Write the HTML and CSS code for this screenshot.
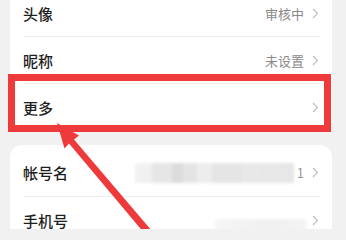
FILE: index.html
```html
<!DOCTYPE html>
<html lang="zh-CN">
<head>
<meta charset="utf-8">
<title>个人信息</title>
<link rel="stylesheet" href="styles.css">
</head>
<body>
<div class="screen">
  <div class="card card-top">
    <div class="row">
      <span class="label">头像</span>
      <span class="value">审核中</span>
      <svg class="chev" width="7" height="11" viewBox="0 0 7 11"><polyline points="1,1 5.5,5.5 1,10" /></svg>
    </div>
    <div class="row">
      <span class="label">昵称</span>
      <span class="value">未设置</span>
      <svg class="chev" width="7" height="11" viewBox="0 0 7 11"><polyline points="1,1 5.5,5.5 1,10" /></svg>
    </div>
    <div class="row">
      <span class="label">更多</span>
      <svg class="chev" width="7" height="11" viewBox="0 0 7 11"><polyline points="1,1 5.5,5.5 1,10" /></svg>
    </div>
  </div>

  <div class="card card-bottom">
    <div class="row">
      <span class="label">帐号名</span>
      <span class="blur blur-name"></span>
      <span class="value value-tail">1</span>
      <svg class="chev" width="7" height="11" viewBox="0 0 7 11"><polyline points="1,1 5.5,5.5 1,10" /></svg>
    </div>
    <div class="row">
      <span class="label">手机号</span>
      <span class="blur blur-phone"></span>
      <svg class="chev" width="7" height="11" viewBox="0 0 7 11"><polyline points="1,1 5.5,5.5 1,10" /></svg>
    </div>
  </div>

  <div class="highlight"></div>
  <svg class="arrow" width="346" height="229" viewBox="0 0 346 229">
    <polygon points="57,123 79,135.5 74,139.5 152,231 145,234 69,143.5 64.5,148.5" />
  </svg>
</div>
</body>
</html>
```

FILE: styles.css
```css
html, body {
  margin: 0;
  padding: 0;
  background: #f1f1f1;
}

.screen {
  position: relative;
  width: 346px;
  height: 229px;
  overflow: hidden;
  padding: 0 14px 0 10px;
  box-sizing: border-box;
  font-family: "Noto Sans CJK SC", "Noto Sans", sans-serif;
}

.card {
  background: #ffffff;
  border-radius: 12px;
}

.card-top {
  margin-top: -10px;
  padding-bottom: 1px;
}

.card-bottom {
  margin-top: 13px;
  padding-top: 4px;
}

.row {
  display: flex;
  align-items: center;
  height: 46px;
  margin: 0 12px 0 13px;
  border-bottom: 1px solid #efefef;
}

.card-top .row:last-child {
  height: 47px;
  border-bottom: none;
}

.card-bottom .row {
  height: 47px;
}

.label {
  flex: 1;
  font-size: 15px;
  font-weight: 500;
  color: #1e1e1e;
  line-height: 1;
}

.value {
  font-size: 13px;
  color: #8a8a8a;
  line-height: 1;
  margin-right: 8px;
}

.value-tail {
  margin-left: 3px;
  color: #999999;
}

.chev {
  display: block;
  margin-right: 1px;
}

.chev polyline {
  fill: none;
  stroke: #bdbdbd;
  stroke-width: 1.1;
}

.blur {
  display: block;
  filter: blur(1.5px);
}

.blur-name {
  width: 159px;
  height: 20px;
  background: linear-gradient(to right,
    #f2f2f2 0, #f0f0f0 17px,
    #e6e6e6 17px, #e6e6e6 37px,
    #dcdcdc 37px, #dcdcdc 48px,
    #e4e4e4 48px, #e4e4e4 62px,
    #ededed 62px, #ededed 77px,
    #e5e5e5 77px, #e5e5e5 107px,
    #e8e8e8 107px, #e6e6e6 159px);
}

.blur-phone {
  width: 92px;
  height: 24px;
  margin-top: 20px;
  margin-right: 5px;
  background: linear-gradient(to right,
    #f6f6f6 0, #f2f2f2 30px, #f0f0f0 60px, #f4f4f4 92px);
}

.highlight {
  position: absolute;
  left: 8px;
  top: 74px;
  width: 323px;
  height: 58px;
  box-sizing: border-box;
  border: 7px solid #ee3a3b;
}

.arrow {
  position: absolute;
  left: 0;
  top: 0;
}

.arrow polygon {
  fill: #ee3a3b;
}
```
